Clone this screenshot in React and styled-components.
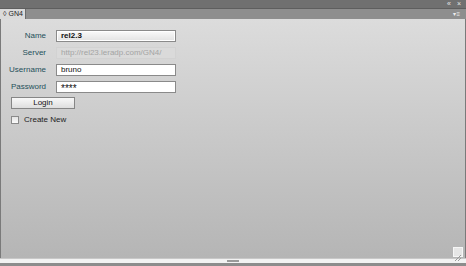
import React from "react";
import styled, { createGlobalStyle } from "styled-components";

const Global = createGlobalStyle`
  html, body { margin: 0; padding: 0; }
  body {
    width: 466px;
    height: 266px;
    overflow: hidden;
    background: #8c8c8c;
    font-family: "Liberation Sans", Arial, sans-serif;
  }
`;

const Frame = styled.div`
  width: 466px;
  height: 266px;
  display: flex;
  flex-direction: column;
  background: #8a8a8a;
`;

const TitleBar = styled.div`
  height: 8px;
  background: #707070;
  border-bottom: 1px solid #5e5e5e;
  display: flex;
  justify-content: flex-end;
  align-items: center;
  gap: 6px;
  padding-right: 5px;
  color: #e8e8e8;
  font-size: 7px;
  line-height: 8px;
`;

const TabRow = styled.div`
  height: 10px;
  background: #8e8e8e;
  display: flex;
  align-items: flex-end;
  justify-content: space-between;
  padding-right: 6px;
`;

const Tab = styled.div`
  height: 10px;
  width: 19px;
  padding: 0 3px;
  background: #dadada;
  border-right: 1px solid #6c6c6c;
  color: #222;
  font-size: 7px;
  line-height: 10px;
  display: flex;
  align-items: center;
  gap: 2px;
`;

const MenuIcon = styled.div`
  color: #eee;
  font-size: 6px;
  line-height: 10px;
`;

const Body = styled.div`
  flex: 1;
  position: relative;
  border-left: 1px solid #7a7a7a;
  border-right: 1px solid #7a7a7a;
  background: linear-gradient(#dcdcdc, #b5b5b5);
  padding: 11px 0 0 0;
`;

const Form = styled.div`
  display: grid;
  grid-template-columns: 45px 120px;
  column-gap: 10px;
  row-gap: 5px;
  align-items: center;
`;

const Label = styled.div`
  text-align: right;
  font-size: 8px;
  color: #24505a;
  line-height: 12px;
`;

const Field = styled.div`
  height: 10px;
  box-sizing: content-box;
  font-size: ${(p) => (p.$stars ? "10px" : "8px")};
  line-height: ${(p) => (p.$stars ? "13px" : "10px")};
  padding: 0 4px;
  overflow: hidden;
  color: ${(p) => (p.$muted ? "#a4a4a4" : "#111")};
  font-weight: ${(p) => (p.$bold ? "bold" : "normal")};
  background: ${(p) =>
    p.$kind === "button"
      ? "linear-gradient(#fafafa, #e2e2e2)"
      : p.$kind === "plain"
      ? "#dadada"
      : "#ffffff"};
  border: 1px solid ${(p) => (p.$kind === "plain" ? "#d2d2d2" : "#8a8a8a")};
  box-shadow: ${(p) =>
    p.$kind === "button" ? "inset 0 0 0 1px #ffffff" : "none"};
`;

const Actions = styled.div`
  padding-left: 10px;
  margin-top: 4px;
  display: flex;
  flex-direction: column;
  gap: 6px;
`;

const Button = styled.div`
  width: 62px;
  height: 10px;
  border: 1px solid #868686;
  background: linear-gradient(#f8f8f8, #dedede);
  font-size: 8px;
  line-height: 10px;
  text-align: center;
  color: #111;
`;

const CheckRow = styled.label`
  display: flex;
  align-items: center;
  gap: 5px;
  font-size: 8px;
  color: #222;
`;

const Box = styled.span`
  width: 6px;
  height: 6px;
  border: 1px solid #8a8a8a;
  background: linear-gradient(#e4e4e4, #fafafa);
`;

const Grip = styled.div`
  position: absolute;
  right: 2px;
  bottom: 1px;
  width: 8px;
  height: 8px;
  background: #e6e6e6;
  border: 1px solid #f6f6f6;
`;

const BottomBar = styled.div`
  height: 4px;
  background: #f2f2f2;
  border-top: 1px solid #c8c8c8;
  display: flex;
  justify-content: center;
  align-items: center;
`;

const Handle = styled.div`
  width: 12px;
  height: 2px;
  background: #9a9a9a;
`;

const Footer = styled.div`
  height: 3px;
  background: #8c8c8c;
`;

export default function App() {
  return (
    <Frame>
      <Global />
      <TitleBar>
        <span>«</span>
        <span>×</span>
      </TitleBar>
      <TabRow>
        <Tab>
          <span>◊</span>
          <span>GN4</span>
        </Tab>
        <MenuIcon>▾≡</MenuIcon>
      </TabRow>
      <Body>
        <Form>
          <Label>Name</Label>
          <Field $kind="button" $bold>rel2.3</Field>
          <Label>Server</Label>
          <Field $kind="plain" $muted>http://rel23.leradp.com/GN4/</Field>
          <Label>Username</Label>
          <Field>bruno</Field>
          <Label>Password</Label>
          <Field $stars>****</Field>
        </Form>
        <Actions>
          <Button>Login</Button>
          <CheckRow>
            <Box />
            Create New
          </CheckRow>
        </Actions>
        <Grip>
          <svg width="8" height="8" viewBox="0 0 8 8">
            <path d="M1 7 L7 1 M4 7 L7 4" stroke="#9a9a9a" strokeWidth="1" />
          </svg>
        </Grip>
      </Body>
      <BottomBar>
        <Handle />
      </BottomBar>
      <Footer />
    </Frame>
  );
}
